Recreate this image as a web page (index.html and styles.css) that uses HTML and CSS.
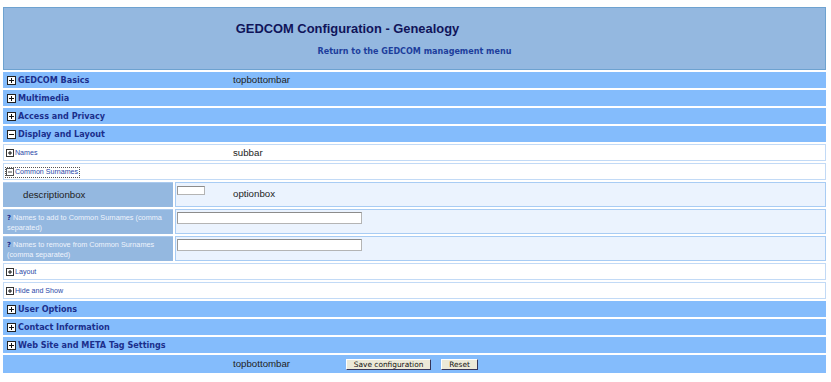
FILE: index.html
```html
<!DOCTYPE html>
<html>
<head>
<meta charset="utf-8">
<title>GEDCOM Configuration - Genealogy</title>
<link rel="stylesheet" href="styles.css">
</head>
<body>
<div class="page">
  <div class="header">
    <div class="title">GEDCOM Configuration - Genealogy</div>
    <div class="return"><a href="#">Return to the GEDCOM management menu</a></div>
  </div>

  <div class="bar top">
    <span class="label"><svg class="ico" width="9" height="9" viewBox="0 0 9 9"><rect x="0.5" y="0.5" width="8" height="8" fill="#fff" stroke="#222"/><path d="M2 4.5H7M4.5 2V7" stroke="#111" stroke-width="1"/></svg>GEDCOM Basics</span>
    <span class="tag">topbottombar</span>
  </div>
  <div class="bar top">
    <span class="label"><svg class="ico" width="9" height="9" viewBox="0 0 9 9"><rect x="0.5" y="0.5" width="8" height="8" fill="#fff" stroke="#222"/><path d="M2 4.5H7M4.5 2V7" stroke="#111" stroke-width="1"/></svg>Multimedia</span>
  </div>
  <div class="bar top">
    <span class="label"><svg class="ico" width="9" height="9" viewBox="0 0 9 9"><rect x="0.5" y="0.5" width="8" height="8" fill="#fff" stroke="#222"/><path d="M2 4.5H7M4.5 2V7" stroke="#111" stroke-width="1"/></svg>Access and Privacy</span>
  </div>
  <div class="bar top">
    <span class="label"><svg class="ico" width="9" height="9" viewBox="0 0 9 9"><rect x="0.5" y="0.5" width="8" height="8" fill="#fff" stroke="#222"/><path d="M2 4.5H7" stroke="#111" stroke-width="1"/></svg>Display and Layout</span>
  </div>

  <div class="bar sub">
    <span class="label"><svg class="ico" width="8" height="8" viewBox="0 0 8 8"><rect x="0.5" y="0.5" width="7" height="7" fill="#fff" stroke="#333"/><path d="M2 4H6M4 2V6" stroke="#111" stroke-width="1"/></svg>Names</span>
    <span class="tag">subbar</span>
  </div>
  <div class="bar sub">
    <span class="label"><a href="#" class="focus"><svg class="ico" width="8" height="8" viewBox="0 0 8 8"><rect x="0.5" y="0.5" width="7" height="7" fill="#fff" stroke="#555"/><path d="M2 4H6" stroke="#444" stroke-width="1"/></svg>Common Surnames</a></span>
  </div>

  <div class="opt-row">
    <div class="desc desc-big">descriptionbox</div>
    <div class="opt">
      <input class="field small" type="text">
      <span class="tag opt-tag">optionbox</span>
    </div>
  </div>
  <div class="opt-row">
    <div class="desc"><b class="help">?</b><span>Names to add to Common Surnames (comma</span><br><span>separated)</span></div>
    <div class="opt"><input class="field wide" type="text"></div>
  </div>
  <div class="opt-row">
    <div class="desc"><b class="help">?</b><span>Names to remove from Common Surnames</span><br><span>(comma separated)</span></div>
    <div class="opt"><input class="field wide" type="text"></div>
  </div>

  <div class="bar sub">
    <span class="label"><svg class="ico" width="8" height="8" viewBox="0 0 8 8"><rect x="0.5" y="0.5" width="7" height="7" fill="#fff" stroke="#333"/><path d="M2 4H6M4 2V6" stroke="#111" stroke-width="1"/></svg>Layout</span>
  </div>
  <div class="bar sub">
    <span class="label"><svg class="ico" width="8" height="8" viewBox="0 0 8 8"><rect x="0.5" y="0.5" width="7" height="7" fill="#fff" stroke="#333"/><path d="M2 4H6M4 2V6" stroke="#111" stroke-width="1"/></svg>Hide and Show</span>
  </div>

  <div class="bar top">
    <span class="label"><svg class="ico" width="9" height="9" viewBox="0 0 9 9"><rect x="0.5" y="0.5" width="8" height="8" fill="#fff" stroke="#222"/><path d="M2 4.5H7M4.5 2V7" stroke="#111" stroke-width="1"/></svg>User Options</span>
  </div>
  <div class="bar top">
    <span class="label"><svg class="ico" width="9" height="9" viewBox="0 0 9 9"><rect x="0.5" y="0.5" width="8" height="8" fill="#fff" stroke="#222"/><path d="M2 4.5H7M4.5 2V7" stroke="#111" stroke-width="1"/></svg>Contact Information</span>
  </div>
  <div class="bar top">
    <span class="label"><svg class="ico" width="9" height="9" viewBox="0 0 9 9"><rect x="0.5" y="0.5" width="8" height="8" fill="#fff" stroke="#222"/><path d="M2 4.5H7M4.5 2V7" stroke="#111" stroke-width="1"/></svg>Web Site and META Tag Settings</span>
  </div>

  <div class="bar bottom">
    <span class="label"></span>
    <span class="tag">topbottombar</span>
    <button class="btn save" type="button">Save configuration</button>
    <button class="btn reset" type="button">Reset</button>
  </div>
</div>
</body>
</html>
```

FILE: styles.css
```css
html, body {
  margin: 0;
  padding: 0;
  background: #ffffff;
}

.page {
  padding: 7px 5px 0 3px;
  display: flex;
  flex-direction: column;
  gap: 2px;
  font-family: "Liberation Sans", Arial, sans-serif;
}

.header {
  box-sizing: border-box;
  height: 63px;
  background: #94b8e0;
  border: 1px solid #6ea2d0;
  display: flex;
  flex-direction: column;
  align-items: center;
}

.title {
  box-sizing: border-box;
  width: 100%;
  padding: 13px 134px 0 0;
  text-align: center;
  font: bold 12.9px/16px "Liberation Sans", Arial, sans-serif;
  color: #10145a;
}

.return {
  width: 100%;
  padding-top: 10px;
  text-align: center;
  font: bold 8.05px/10px "DejaVu Sans", Verdana, sans-serif;
}

.return a {
  color: #1d3e9c;
  text-decoration: none;
}

.bar {
  box-sizing: border-box;
  display: flex;
  align-items: center;
}

.bar.top {
  height: 16px;
  background: #84bcfc;
}

.bar.sub {
  height: 17px;
  background: #ffffff;
  border: 1px solid #c2daf6;
}

.bar.bottom {
  height: 18px;
  background: #84bcfc;
}

.label {
  box-sizing: border-box;
  width: 230px;
  flex: none;
  display: flex;
  align-items: center;
}

.top .label {
  padding-left: 4px;
  font: bold 8.1px/10px "DejaVu Sans", Verdana, sans-serif;
  color: #1b2f8c;
}

.top .label .ico {
  margin-right: 2px;
}

.sub .label {
  width: 229px;
  padding: 1px 0 0 2px;
  font: 7.1px/9px "Liberation Sans", Arial, sans-serif;
  color: #2a48a8;
}

.sub .label .ico {
  margin-right: 1px;
}

.sub .label a {
  color: #2a48a8;
  text-decoration: none;
  display: inline-flex;
  align-items: center;
  outline: 1px dotted #555;
  outline-offset: 0;
  padding-right: 1px;
}

.ico {
  display: block;
  flex: none;
}

.tag {
  font: 9.7px/12px "Liberation Sans", Arial, sans-serif;
  color: #222;
}

.opt-row {
  display: flex;
  gap: 2px;
  height: 25px;
}

.desc {
  box-sizing: border-box;
  width: 170px;
  flex: none;
  background: #94b8e0;
  border-top: 1px solid #a9c9ee;
  padding: 3px 4px 0 4px;
  font: 7.3px/10px "Liberation Sans", Arial, sans-serif;
  color: #eef3fc;
}

.desc-big {
  display: flex;
  align-items: center;
  padding: 0 0 0 20px;
  font: 9.7px/12px "Liberation Sans", Arial, sans-serif;
  color: #222;
}

.help {
  display: inline-block;
  margin-right: 2px;
  font: bold 7px/10px "DejaVu Sans", Verdana, sans-serif;
  color: #1a2c8c;
}

.opt {
  box-sizing: border-box;
  flex: 1;
  background: #ebf3fe;
  border: 1px solid #a8ccf4;
  padding: 2px 1px 0 1px;
  display: flex;
  align-items: flex-start;
}

.field {
  box-sizing: border-box;
  margin: 0;
  padding: 0;
  background: #fff;
  border: 1px solid #b4b4b4;
  border-top-color: #8c8c8c;
  border-left-color: #9a9a9a;
  font-size: 7px;
}

.field.small {
  width: 28px;
  height: 9px;
  margin-top: 1px;
}

.field.wide {
  width: 185px;
  height: 12px;
}

.opt-tag {
  align-self: center;
  margin-left: 28px;
  margin-top: -4px;
}

.btn {
  box-sizing: border-box;
  height: 11px;
  margin: 0;
  padding: 0;
  background: #ece9d8;
  border: 1px solid #fff;
  border-right-color: #35355a;
  border-bottom-color: #35355a;
  font: 7.4px/9px "DejaVu Sans", Verdana, sans-serif;
  color: #111;
}

.btn.save {
  width: 85px;
  margin-left: 56px;
}

.btn.reset {
  width: 37px;
  margin-left: 10px;
}
```
